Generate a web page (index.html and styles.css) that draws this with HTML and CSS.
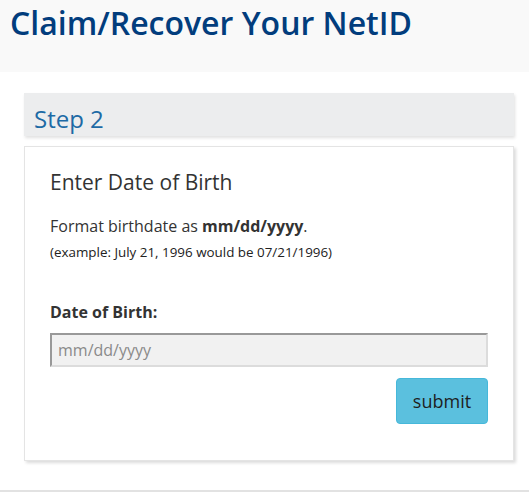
FILE: index.html
```html
<!DOCTYPE html>
<html>
<head>
<meta charset="utf-8">
<link rel="stylesheet" href="styles.css">
</head>
<body>
<header class="page-header">
  <h1 class="page-title">Claim/Recover Your NetID</h1>
</header>
<main class="content">
  <div class="step-panel">
    <h2 class="step-title">Step 2</h2>
  </div>
  <section class="card">
    <h3 class="card-title">Enter Date of Birth</h3>
    <p class="format">Format birthdate as <strong>mm/dd/yyyy</strong>.</p>
    <p class="example">(example: July 21, 1996 would be 07/21/1996)</p>
    <form class="dob-form">
      <label class="dob-label" for="dob">Date of Birth:</label>
      <input class="dob-input" id="dob" type="text" placeholder="mm/dd/yyyy">
      <div class="actions">
        <button class="submit-btn" type="button">submit</button>
      </div>
    </form>
  </section>
</main>
<footer class="page-footer"></footer>
</body>
</html>
```
FILE: styles.css
```css
html, body {
  margin: 0;
  padding: 0;
  background: #fff;
  font-family: "Open Sans", "Liberation Sans", sans-serif;
  color: #333;
}

.page-header {
  background: #f9f9f9;
  height: 72px;
  padding: 0 10px;
  box-sizing: border-box;
}

.page-title {
  margin: 0;
  padding-top: 2px;
  font-size: 32px;
  line-height: 42px;
  font-weight: 600;
  color: #023d7d;
}

.content {
  padding: 21px 15px 0 24px;
}

.step-panel {
  background: #ecedee;
  height: 43px;
  padding: 0 10px;
  box-sizing: border-box;
  box-shadow: 1px 2px 3px rgba(0, 0, 0, 0.12);
}

.step-title {
  margin: 0;
  padding-top: 10px;
  font-size: 24px;
  line-height: 32px;
  font-weight: 400;
  color: #1d6aa5;
}

.card {
  margin-top: 10px;
  background: #fff;
  border: 1px solid #e4e4e4;
  box-shadow: 2px 2px 3px rgba(0, 0, 0, 0.14);
  padding: 21px 25px 36px 25px;
}

.card-title {
  margin: 0;
  font-size: 21px;
  line-height: 28px;
  font-weight: 400;
  color: #333;
}

.format {
  margin: 19px 0 0;
  font-size: 16px;
  line-height: 22px;
  color: #333;
}

.format strong {
  font-weight: 700;
}

.example {
  margin: 6px 0 0;
  font-size: 13.4px;
  line-height: 18px;
  color: #222;
}

.dob-form {
  margin-top: 40px;
}

.dob-label {
  display: block;
  font-size: 16px;
  font-weight: 700;
  line-height: 22px;
  color: #333;
}

.dob-input {
  display: block;
  margin-top: 10px;
  width: 100%;
  height: 34px;
  box-sizing: border-box;
  background: #f1f1f1;
  border-style: solid;
  border-width: 2px;
  border-color: #999 #dcdcdc #dcdcdc #999;
  padding: 0 6px;
  font-family: "Open Sans", "Liberation Sans", sans-serif;
  font-size: 16px;
  color: #333;
}

.dob-input::placeholder {
  color: #8a8a8a;
}

.actions {
  display: flex;
  justify-content: flex-end;
  margin-top: 11px;
}

.submit-btn {
  width: 92px;
  height: 46px;
  background: #5bc0de;
  border: 1px solid #46b8da;
  border-radius: 4px;
  font-family: "Open Sans", "Liberation Sans", sans-serif;
  font-size: 18px;
  color: #1e1e1e;
  padding: 0;
}

.page-footer {
  margin-top: 29px;
  border-top: 2px solid #e2e2e2;
}
```
